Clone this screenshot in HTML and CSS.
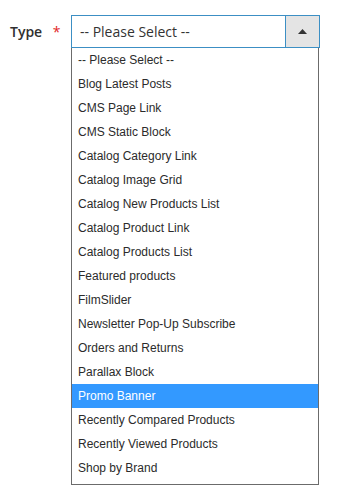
FILE: index.html
```html
<!DOCTYPE html>
<html lang="en">
<head>
    <meta charset="UTF-8">
    <meta name="viewport" content="width=device-width, initial-scale=1.0">
    <title>Widget Type</title>
    <link rel="stylesheet" href="styles.css">
</head>
<body>

<div class="field">
    <label class="field-label">Type <span class="required">*</span></label>
    <div class="field-control">
        <div class="select-box">
            <span class="select-value">-- Please Select --</span>
            <span class="select-button">
                <svg width="9" height="5" viewBox="0 0 9 5"><path d="M0 5 L4.5 0 L9 5 Z" fill="#333"/></svg>
            </span>
        </div>
        <ul class="select-list">
            <li>-- Please Select --</li>
            <li>Blog Latest Posts</li>
            <li>CMS Page Link</li>
            <li>CMS Static Block</li>
            <li>Catalog Category Link</li>
            <li>Catalog Image Grid</li>
            <li>Catalog New Products List</li>
            <li>Catalog Product Link</li>
            <li>Catalog Products List</li>
            <li>Featured products</li>
            <li>FilmSlider</li>
            <li>Newsletter Pop-Up Subscribe</li>
            <li>Orders and Returns</li>
            <li>Parallax Block</li>
            <li class="selected">Promo Banner</li>
            <li>Recently Compared Products</li>
            <li>Recently Viewed Products</li>
            <li>Shop by Brand</li>
        </ul>
    </div>
</div>

</body>
</html>
```

FILE: styles.css
```css
body {
    margin: 0;
    background: #fff;
    font-family: "Open Sans", Arial, sans-serif;
    color: #333;
}
.field {
    display: flex;
    align-items: flex-start;
    padding: 15px 0 0 10px;
}
.field-label {
    width: 61px;
    font-size: 14px;
    font-weight: 600;
    line-height: 34px;
    color: #303030;
}
.required {
    color: #e22626;
    font-weight: 400;
    margin-left: 7px;
}
.field-control {
    width: 249px;
}
.select-box {
    display: flex;
    height: 31px;
    border: 1px solid #3c8fc4;
}
.select-value {
    flex: 1;
    padding-left: 8px;
    font-size: 14px;
    line-height: 31px;
    color: #333;
}
.select-button {
    width: 33px;
    border-left: 1px solid #3c8fc4;
    background: #e4e4e4;
    display: flex;
    align-items: center;
    justify-content: center;
}
.select-list {
    list-style: none;
    margin: 0;
    padding: 0 0 4px 0;
    width: 246px;
    border: 1px solid #6b6b6b;
    border-top: none;
    font-family: "Liberation Sans", Arial, sans-serif;
    font-size: 12px;
    color: #2b2b2b;
}
.select-list li {
    height: 24px;
    line-height: 25px;
    padding-left: 6px;
}
.select-list li.selected {
    background: #3399ff;
    color: #fff;
}
```
